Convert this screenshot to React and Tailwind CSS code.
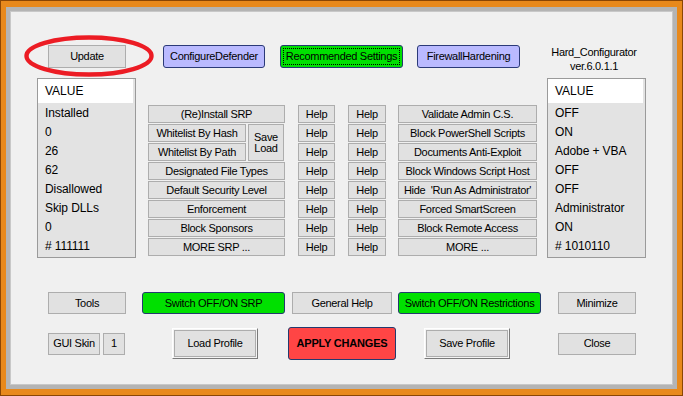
import React from "react";

const gray = "flex items-center justify-center bg-[#e1e1e1] border border-[#adadad] text-[11px] tracking-[-0.3px] leading-none whitespace-nowrap";
const purple = "flex items-center justify-center bg-[#babaff] border border-[#2b3a78] rounded-[3px] text-[11px] tracking-[-0.3px] leading-none whitespace-nowrap";
const green = "flex items-center justify-center bg-[#00e000] border border-[#243a6e] rounded-[3px] text-[11px] tracking-[-0.3px] leading-none whitespace-nowrap";
const raised = "flex p-[1px] border border-t-white border-l-white border-b-[#7a7a7a] border-r-[#7a7a7a] bg-[#f4f4f4]";

const srpRows = ["Designated File Types", "Default Security Level", "Enforcement", "Block Sponsors", "MORE SRP ..."];
const rightRows = [
  "Validate Admin C.S.",
  "Block PowerShell Scripts",
  "Documents Anti-Exploit",
  "Block Windows Script Host",
  "Hide  'Run As Administrator'",
  "Forced SmartScreen",
  "Block Remote Access",
  "MORE ...",
];
const leftValues = ["Installed", "0", "26", "62", "Disallowed", "Skip DLLs", "0", "# 111111"];
const rightValues = ["OFF", "ON", "Adobe + VBA", "OFF", "OFF", "Administrator", "ON", "# 1010110"];

function ValueList({ items, className }) {
  return (
    <div className={`flex flex-col w-[99px] h-[180px] border border-[#9a9a9a] bg-[#e3e3e3] ${className}`}>
      <div className="flex items-center h-[24px] bg-white mr-[2px] pl-[7px] text-[12px]">VALUE</div>
      {items.map((v, i) => (
        <div key={i} className="flex items-center h-[19px] pl-[7px] text-[12px] tracking-[-0.1px]">
          {v}
        </div>
      ))}
    </div>
  );
}

function HelpCol({ className }) {
  return (
    <div className={`flex flex-col gap-[1px] ${className}`}>
      {rightRows.map((_, i) => (
        <div key={i} className={`${gray} h-[18px]`}>Help</div>
      ))}
    </div>
  );
}

export default function App() {
  return (
    <div className="relative w-[683px] h-[396px] overflow-hidden bg-[#e8891c] border border-[#8a4604] px-[5px] py-[6px] font-['Liberation_Sans',Arial,sans-serif] text-black">
      <div className="h-full border-[4px] border-[#b4b4b4]">
        <div className="h-full bg-[#f0f0f0] border border-[#c8c8c8] flex flex-col">
          {/* top buttons */}
          <div className="flex items-start h-[23px] mt-[33px]">
            <div className={`${gray} ml-[37px] w-[78px] h-[23px]`}>Update</div>
            <div className={`${purple} ml-[37px] w-[102px] h-[23px]`}>ConfigureDefender</div>
            <div className={`${green} ml-[15px] w-[123px] h-[23px] p-[2px]`}>
              <div className="flex items-center justify-center w-full h-full border border-dotted border-black">
                Recommended Settings
              </div>
            </div>
            <div className={`${purple} ml-[14px] w-[103px] h-[23px]`}>FirewallHardening</div>
            <div className="ml-[24px] w-[100px] text-center text-[11px] tracking-[-0.3px] leading-[14px]">
              <div>Hard_Configurator</div>
              <div>ver.6.0.1.1</div>
            </div>
          </div>

          {/* main area */}
          <div className="flex items-start mt-[10px] h-[180px]">
            <ValueList items={leftValues} className="ml-[26px]" />

            <div className="flex items-start mt-[27px] ml-[12px]">
              <div className="flex flex-col gap-[1px] w-[137px]">
                <div className={`${gray} h-[18px]`}>(Re)Install SRP</div>
                <div className="flex gap-[2px]">
                  <div className="flex flex-col gap-[1px] w-[98px]">
                    <div className={`${gray} h-[18px]`}>Whitelist By Hash</div>
                    <div className={`${gray} h-[18px]`}>Whitelist By Path</div>
                  </div>
                  <div className={`${gray} flex-col w-[36px] h-[37px] leading-[16px] gap-0`}>
                    <span>Save</span>
                    <span>Load</span>
                  </div>
                </div>
                {srpRows.map((t) => (
                  <div key={t} className={`${gray} h-[18px]`}>{t}</div>
                ))}
              </div>
              <HelpCol className="ml-[13px] w-[37px]" />
              <HelpCol className="ml-[13px] w-[38px]" />
              <div className="flex flex-col gap-[1px] ml-[12px] w-[139px]">
                {rightRows.map((t) => (
                  <div key={t} className={`${gray} h-[18px] whitespace-pre`}>{t}</div>
                ))}
              </div>
            </div>

            <ValueList items={rightValues} className="ml-[10px]" />
          </div>

          {/* bottom row 1 */}
          <div className="flex items-center h-[22px] mt-[34px]">
            <div className={`${gray} ml-[37px] w-[78px] h-[22px]`}>Tools</div>
            <div className={`${green} ml-[16px] w-[143px] h-[22px]`}>Switch OFF/ON SRP</div>
            <div className={`${gray} ml-[7px] w-[100px] h-[22px]`}>General Help</div>
            <div className={`${green} ml-[6px] w-[143px] h-[22px]`}>Switch OFF/ON Restrictions</div>
            <div className={`${gray} ml-[17px] w-[78px] h-[22px]`}>Minimize</div>
          </div>

          {/* bottom row 2 */}
          <div className="flex items-center h-[33px] mt-[13px]">
            <div className={`${gray} ml-[37px] w-[52px] h-[22px]`}>GUI Skin</div>
            <div className={`${gray} ml-[3px] w-[22px] h-[22px]`}>1</div>
            <div className={`${raised} ml-[47px] w-[86px] h-[31px]`}>
              <div className={`${gray} w-full h-full border-[#8a8a8a]`}>Load Profile</div>
            </div>
            <div className="flex items-center justify-center ml-[30px] w-[108px] h-[33px] bg-[#ff4545] border border-[#243a6e] rounded-[3px] text-[11px] font-bold tracking-[-0.2px]">
              APPLY CHANGES
            </div>
            <div className={`${raised} ml-[28px] w-[86px] h-[31px]`}>
              <div className={`${gray} w-full h-full border-[#8a8a8a]`}>Save Profile</div>
            </div>
            <div className={`${gray} ml-[48px] w-[78px] h-[22px]`}>Close</div>
          </div>
        </div>
      </div>

      {/* red highlight ellipse */}
      <svg className="absolute left-[19px] top-[30px] pointer-events-none" width="138" height="50" viewBox="0 0 138 50">
        <ellipse cx="69" cy="25" rx="62.5" ry="18.5" fill="none" stroke="#ec1c24" strokeWidth="4.4" />
      </svg>
    </div>
  );
}
